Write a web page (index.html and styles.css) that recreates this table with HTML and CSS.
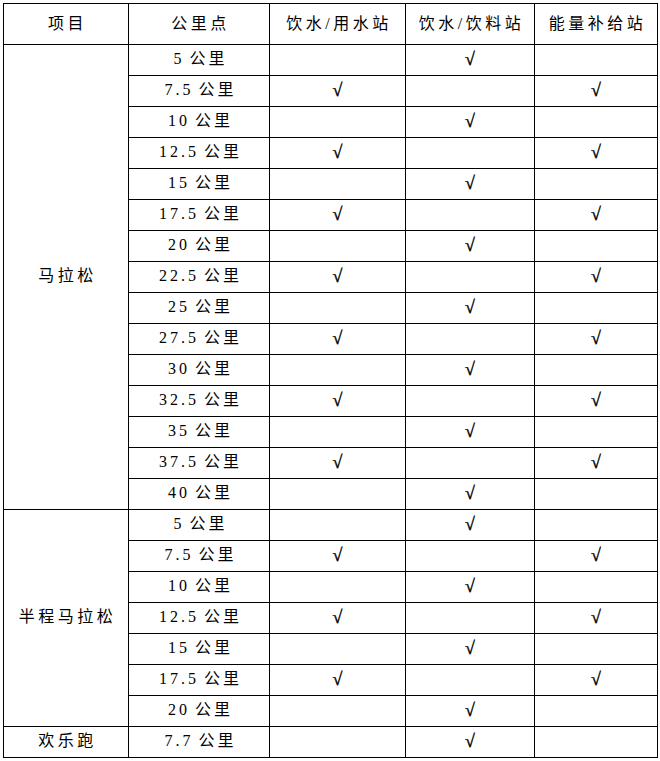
FILE: index.html
```html
<!DOCTYPE html>
<html lang="zh">
<head>
<meta charset="utf-8">
<link rel="stylesheet" href="styles.css">
</head>
<body>
<table class="grid">
  <colgroup>
    <col class="c1"><col class="c2"><col class="c3"><col class="c4"><col class="c5">
  </colgroup>
  <thead>
    <tr class="head"><th>项目</th><th>公里点</th><th>饮水/用水站</th><th>饮水/饮料站</th><th>能量补给站</th></tr>
  </thead>
  <tbody>
    <tr><td class="cat" rowspan="15">马拉松</td><td>5 公里</td><td></td><td class="ck">√</td><td></td></tr>
    <tr><td>7.5 公里</td><td class="ck">√</td><td></td><td class="ck">√</td></tr>
    <tr><td>10 公里</td><td></td><td class="ck">√</td><td></td></tr>
    <tr><td>12.5 公里</td><td class="ck">√</td><td></td><td class="ck">√</td></tr>
    <tr><td>15 公里</td><td></td><td class="ck">√</td><td></td></tr>
    <tr><td>17.5 公里</td><td class="ck">√</td><td></td><td class="ck">√</td></tr>
    <tr><td>20 公里</td><td></td><td class="ck">√</td><td></td></tr>
    <tr><td>22.5 公里</td><td class="ck">√</td><td></td><td class="ck">√</td></tr>
    <tr><td>25 公里</td><td></td><td class="ck">√</td><td></td></tr>
    <tr><td>27.5 公里</td><td class="ck">√</td><td></td><td class="ck">√</td></tr>
    <tr><td>30 公里</td><td></td><td class="ck">√</td><td></td></tr>
    <tr><td>32.5 公里</td><td class="ck">√</td><td></td><td class="ck">√</td></tr>
    <tr><td>35 公里</td><td></td><td class="ck">√</td><td></td></tr>
    <tr><td>37.5 公里</td><td class="ck">√</td><td></td><td class="ck">√</td></tr>
    <tr><td>40 公里</td><td></td><td class="ck">√</td><td></td></tr>
    <tr><td class="cat" rowspan="7">半程马拉松</td><td>5 公里</td><td></td><td class="ck">√</td><td></td></tr>
    <tr><td>7.5 公里</td><td class="ck">√</td><td></td><td class="ck">√</td></tr>
    <tr><td>10 公里</td><td></td><td class="ck">√</td><td></td></tr>
    <tr><td>12.5 公里</td><td class="ck">√</td><td></td><td class="ck">√</td></tr>
    <tr><td>15 公里</td><td></td><td class="ck">√</td><td></td></tr>
    <tr><td>17.5 公里</td><td class="ck">√</td><td></td><td class="ck">√</td></tr>
    <tr><td>20 公里</td><td></td><td class="ck">√</td><td></td></tr>
    <tr><td class="cat">欢乐跑</td><td>7.7 公里</td><td></td><td class="ck">√</td><td></td></tr>
  </tbody>
</table>
</body>
</html>
```

FILE: styles.css
```css
html, body {
  margin: 0;
  padding: 0;
  background: #fff;
}

body {
  padding: 3px 0 0 3px;
}

.grid {
  border-collapse: collapse;
  table-layout: fixed;
  width: 654px;
  font-family: "Liberation Serif", "Noto Sans CJK SC", serif;
  font-size: 16px;
  color: #000;
  word-spacing: -2px;
}

.c1 { width: 125px; }
.c2 { width: 141px; }
.c3 { width: 136px; }
.c4 { width: 129px; }
.c5 { width: 123px; }

.grid th,
.grid td {
  border: 1px solid #000;
  padding: 0;
  text-align: center;
  vertical-align: middle;
  letter-spacing: 3px;
  text-indent: 3px;
  line-height: 20px;
}

.grid th {
  font-weight: normal;
  height: 40px;
  letter-spacing: 3.5px;
}

.grid td {
  height: 28px;
  padding-bottom: 2px;
}

.grid .cat {
  letter-spacing: 3.5px;
}

.grid .ck {
  letter-spacing: 0;
  text-indent: 0;
  font-size: 18px;
  -webkit-text-stroke: 0.4px #000;
}
```
